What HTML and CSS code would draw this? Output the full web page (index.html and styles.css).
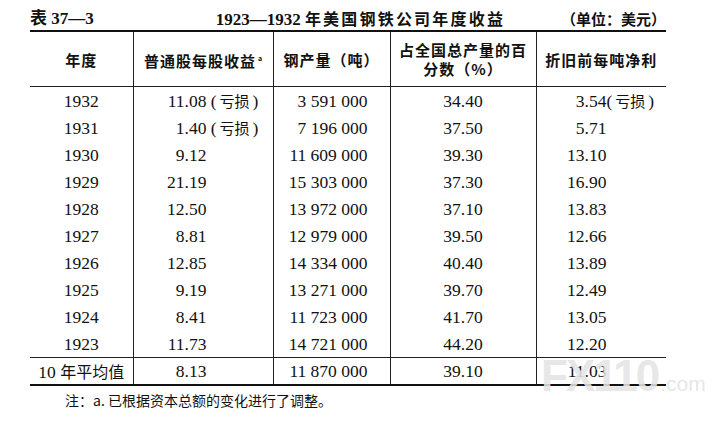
FILE: index.html
```html
<!DOCTYPE html>
<html lang="zh">
<head>
<meta charset="utf-8">
<link rel="stylesheet" href="styles.css">
</head>
<body>
<div class="page">
  <div class="caption">
    <span class="cap-no">表 37—3</span>
    <span class="cap-title">1923—1932 <span class="cjk">年美国钢铁公司年度收益</span></span>
    <span class="cap-unit">（单位：美元）</span>
  </div>
  <table class="data">
    <colgroup>
      <col class="c1"><col class="c2"><col class="c3"><col class="c4"><col class="c5">
    </colgroup>
    <thead>
      <tr>
        <th>年度</th>
        <th>普通股每股收益<sup class="mark">a</sup></th>
        <th>钢产量（吨）</th>
        <th class="two">占全国总产量的百<br>分数（%）</th>
        <th>折旧前每吨净利</th>
      </tr>
    </thead>
    <tbody>
      <tr><td>1932</td><td class="eps"><span class="i">11</span>.08 (<span class="ks">亏损</span>)</td><td class="prod">3 591 000</td><td>34.40</td><td class="net"><span class="i">3</span>.54(<span class="ks">亏损</span>)</td></tr>
      <tr><td>1931</td><td class="eps"><span class="i">1</span>.40 (<span class="ks">亏损</span>)</td><td class="prod">7 196 000</td><td>37.50</td><td class="net"><span class="i">5</span>.71</td></tr>
      <tr><td>1930</td><td class="eps"><span class="i">9</span>.12</td><td class="prod">11 609 000</td><td>39.30</td><td class="net"><span class="i">13</span>.10</td></tr>
      <tr><td>1929</td><td class="eps"><span class="i">21</span>.19</td><td class="prod">15 303 000</td><td>37.30</td><td class="net"><span class="i">16</span>.90</td></tr>
      <tr><td>1928</td><td class="eps"><span class="i">12</span>.50</td><td class="prod">13 972 000</td><td>37.10</td><td class="net"><span class="i">13</span>.83</td></tr>
      <tr><td>1927</td><td class="eps"><span class="i">8</span>.81</td><td class="prod">12 979 000</td><td>39.50</td><td class="net"><span class="i">12</span>.66</td></tr>
      <tr><td>1926</td><td class="eps"><span class="i">12</span>.85</td><td class="prod">14 334 000</td><td>40.40</td><td class="net"><span class="i">13</span>.89</td></tr>
      <tr><td>1925</td><td class="eps"><span class="i">9</span>.19</td><td class="prod">13 271 000</td><td>39.70</td><td class="net"><span class="i">12</span>.49</td></tr>
      <tr><td>1924</td><td class="eps"><span class="i">8</span>.41</td><td class="prod">11 723 000</td><td>41.70</td><td class="net"><span class="i">13</span>.05</td></tr>
      <tr><td>1923</td><td class="eps"><span class="i">11</span>.73</td><td class="prod">14 721 000</td><td>44.20</td><td class="net"><span class="i">12</span>.20</td></tr>
    </tbody>
    <tfoot>
      <tr><td>10 <span class="avg">年平均值</span></td><td class="eps"><span class="i">8</span>.13</td><td class="prod">11 870 000</td><td>39.10</td><td class="net"><span class="i">11</span>.03</td></tr>
    </tfoot>
  </table>
  <p class="note">注：a. 已根据资本总额的变化进行了调整。</p>
  <div class="watermark"><span class="wm-big">FX110</span><span class="wm-com">.com</span></div>
</div>
</body>
</html>
```
FILE: styles.css
```css
html, body {
  margin: 0;
  padding: 0;
  background: #ffffff;
}
body {
  font-family: "Liberation Serif", "Noto Sans CJK SC", serif;
  color: #111;
}
.page {
  position: relative;
  width: 724px;
  height: 427px;
  padding: 0 0 0 30px;
  box-sizing: border-box;
  overflow: hidden;
}
.caption {
  width: 636px;
  display: flex;
  justify-content: space-between;
  align-items: center;
  padding-top: 8px;
  height: 22px;
  font-weight: 700;
  font-size: 17px;
  line-height: 22px;
  white-space: nowrap;
}
.cap-no, .cap-title {
  font-family: "Liberation Serif", "Noto Sans CJK SC", serif;
}
.cap-title {
  margin-left: 66px;
}
.cap-title .cjk {
  font-family: "Noto Sans CJK SC", sans-serif;
  font-size: 16px;
  letter-spacing: 2.2px;
}
.cap-unit {
  font-family: "Noto Sans CJK SC", sans-serif;
  font-size: 15px;
}
.data {
  width: 636px;
  border-collapse: collapse;
  table-layout: fixed;
  border-top: 2px solid #111;
  border-bottom: 2px solid #111;
}
.c1 { width: 103px; }
.c2 { width: 140px; }
.c3 { width: 117px; }
.c4 { width: 146px; }
.c5 { width: 130px; }
.data th, .data td {
  border-left: 1px solid #222;
  padding: 0;
  text-align: center;
  font-size: 17.5px;
  white-space: nowrap;
}
.data th:first-child, .data td:first-child {
  border-left: none;
}
.data th {
  height: 54px;
  font-family: "Noto Sans CJK SC", sans-serif;
  font-weight: 700;
  font-size: 15px;
  letter-spacing: 1px;
  line-height: 19px;
  border-bottom: 1px solid #222;
}
.mark {
  font-size: 7px;
  vertical-align: 6px;
  margin-left: 2px;
  letter-spacing: 0;
}
.data td {
  height: 27px;
  line-height: 20px;
}
.ks {
  font-family: "Noto Sans CJK SC", sans-serif;
  font-size: 15px;
  margin: 0 3px;
}
.avg {
  font-family: "Noto Sans CJK SC", sans-serif;
  font-size: 16px;
}
.data tfoot td {
  border-top: 1px solid #222;
  height: 26px;
}
.data td.eps, .data td.net {
  text-align: left;
}
.data td.eps { padding-left: 33px; }
.data td.net { padding-left: 30px; }
.i {
  display: inline-block;
  width: 18px;
  text-align: right;
}
.data td.prod {
  text-align: right;
  padding-right: 22px;
}
.note {
  margin: 4px 0 0 35px;
  font-family: "Noto Sans CJK SC", sans-serif;
  font-size: 14px;
  line-height: 20px;
}
.watermark {
  position: absolute;
  left: 541px;
  top: 359px;
  color: rgba(228, 228, 228, 0.9);
  font-family: "Liberation Sans", sans-serif;
  font-weight: 700;
  white-space: nowrap;
  line-height: 34px;
}
.wm-big {
  font-size: 44px;
  letter-spacing: -2px;
}
.wm-com {
  font-size: 21px;
  font-weight: 400;
  margin-left: 2px;
}
```
